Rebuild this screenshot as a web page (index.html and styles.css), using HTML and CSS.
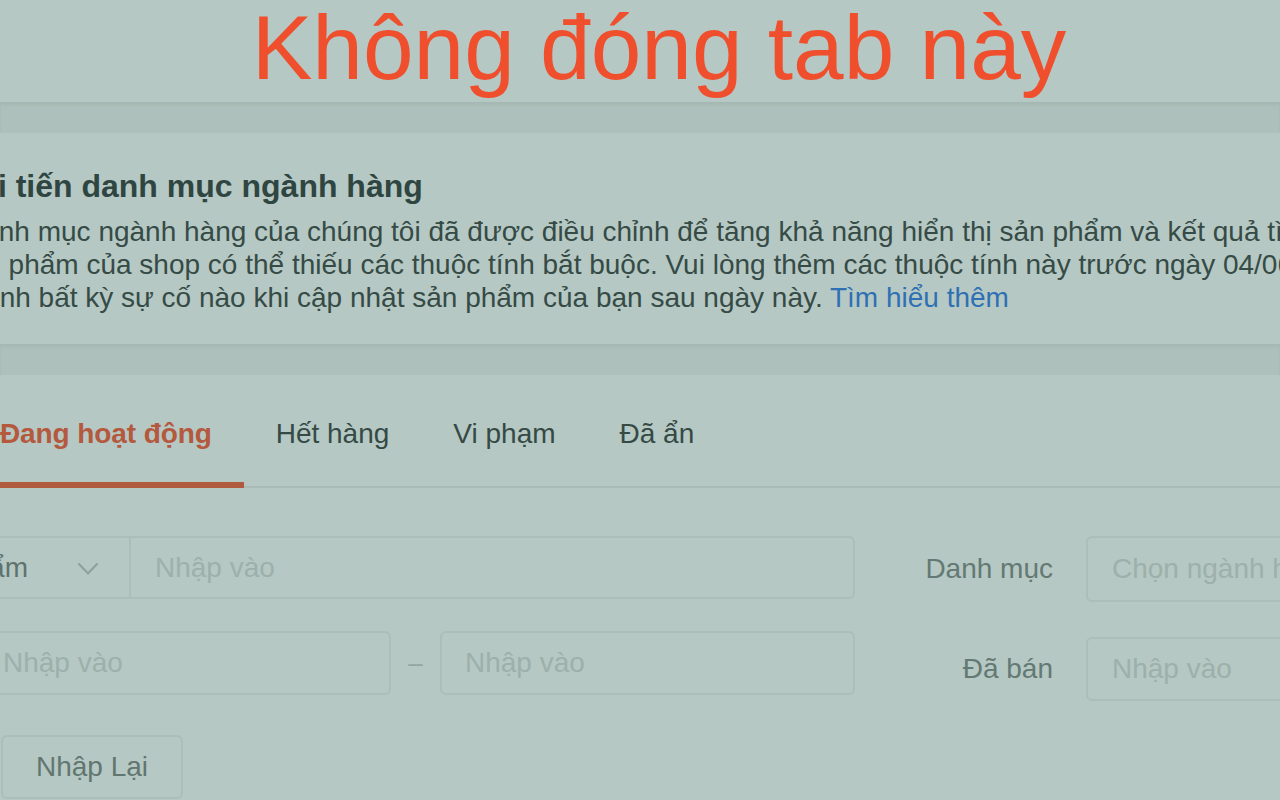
FILE: index.html
```html
<!DOCTYPE html>
<html lang="vi">
<head>
<meta charset="utf-8">
<title>Sản phẩm</title>
<link rel="stylesheet" href="styles.css">
</head>
<body>
<div class="page">
  <header class="topbar">
    <h1 class="warn">Không đóng tab này</h1>
  </header>
  <div class="band"></div>
  <section class="notice">
    <h2 class="notice-title">Cải tiến danh mục ngành hàng</h2>
    <div class="notice-body">
      <div class="line l1">Danh mục ngành hàng của chúng tôi đã được điều chỉnh để tăng khả năng hiển thị sản phẩm và kết quả tìm kiếm.</div>
      <div class="line l2">Sản phẩm của shop có thể thiếu các thuộc tính bắt buộc. Vui lòng thêm các thuộc tính này trước ngày 04/06/2022 để</div>
      <div class="line">tránh bất kỳ sự cố nào khi cập nhật sản phẩm của bạn sau ngày này. <a class="link" href="#">Tìm hiểu thêm</a></div>
    </div>
  </section>
  <div class="band"></div>
  <section class="panel">
    <nav class="tabs">
      <div class="tab active">Đang hoạt động</div>
      <div class="tab">Hết hàng</div>
      <div class="tab">Vi phạm</div>
      <div class="tab">Đã ẩn</div>
    </nav>
    <form class="filters">
      <div class="row">
        <div class="left group">
          <div class="select-seg">
            <span class="seg-text">Tên sản phẩm</span>
            <svg class="chev" width="22" height="14" viewBox="0 0 22 14"><path d="M1.5 1.5 L11 11.5 L20.5 1.5" fill="none" stroke="#8ea29d" stroke-width="2.2"/></svg>
          </div>
          <input class="seg-input" type="text" placeholder="Nhập vào">
        </div>
        <label class="label">Danh mục</label>
        <input class="rinput" type="text" placeholder="Chọn ngành hàng">
      </div>
      <div class="row">
        <div class="left range">
          <input class="box first" type="text" placeholder="Nhập vào">
          <span class="dash">–</span>
          <input class="box second" type="text" placeholder="Nhập vào">
        </div>
        <label class="label lower">Đã bán</label>
        <input class="rinput lower" type="text" placeholder="Nhập vào">
      </div>
      <div class="row actions">
        <button class="btn" type="button">Nhập Lại</button>
      </div>
    </form>
  </section>
</div>
</body>
</html>
```

FILE: styles.css
```css
html, body {
  margin: 0;
  padding: 0;
}
body {
  width: 1280px;
  height: 800px;
  overflow: hidden;
  background: #b5c8c3;
  font-family: "Liberation Sans", Arial, Helvetica, sans-serif;
  color: #364b46;
}
.page {
  width: 1280px;
  overflow: hidden;
}
.topbar {
  height: 102px;
  padding-left: 38px;
  box-sizing: border-box;
  text-align: center;
}
.warn {
  margin: 0;
  font-size: 91px;
  line-height: 96px;
  font-weight: 400;
  color: #f04f2d;
}
.band {
  height: 31px;
  background: #aec0bb;
  border-top: 1px solid #a6b8b3;
  box-sizing: border-box;
  box-shadow: inset 0 2px 3px rgba(80, 100, 95, 0.08);
}
.notice {
  height: 211px;
  box-sizing: border-box;
  padding-top: 35px;
}
.notice-title {
  margin: 0 0 10px -43px;
  font-size: 32px;
  line-height: 37px;
  font-weight: 700;
  color: #2f4541;
  white-space: nowrap;
}
.notice-body {
  margin-left: -33px;
  font-size: 28px;
  line-height: 33px;
  color: #364b46;
}
.line {
  white-space: nowrap;
}
.l1 {
  text-indent: -4px;
}
.l2 {
  text-indent: -16px;
}
.link {
  color: #2f70b4;
  text-decoration: none;
}
.tabs {
  display: flex;
  margin-left: -32px;
  border-bottom: 2px solid #a8bbb6;
}
.tab {
  padding: 43px 32px 32px;
  font-size: 28px;
  line-height: 32px;
  color: #354a45;
  border-bottom: 6px solid transparent;
  margin-bottom: -2px;
  white-space: nowrap;
}
.tab.active {
  color: #b4583e;
  font-weight: 700;
  letter-spacing: -0.1px;
  border-bottom-color: #b05a40;
}
.filters {
  margin: 48px 0 0 -22px;
  display: flex;
  flex-direction: column;
  gap: 29px;
}
.row {
  display: flex;
  align-items: flex-start;
}
.actions {
  padding-top: 5px;
}
.left {
  width: 877px;
  flex: none;
  display: flex;
}
.group {
  height: 63px;
  border: 2px solid #abbeb9;
  border-radius: 6px;
  box-sizing: border-box;
}
.select-seg {
  width: 151px;
  flex: none;
  display: flex;
  align-items: center;
  justify-content: flex-end;
  overflow: hidden;
  padding-right: 30px;
  box-sizing: border-box;
  border-right: 2px solid #abbeb9;
  font-size: 28px;
  color: #5f736e;
  white-space: nowrap;
}
.chev {
  flex: none;
  margin-left: 49px;
  margin-top: 2px;
}
input {
  font-family: "Liberation Sans", Arial, Helvetica, sans-serif;
  font-size: 28px;
  color: #364b46;
  background: transparent;
  outline: none;
  box-sizing: border-box;
}
input::placeholder {
  color: #9db0ab;
  opacity: 1;
}
.seg-input {
  flex: 1;
  border: none;
  padding: 0 0 0 24px;
  height: 59px;
}
.range {
  align-items: center;
}
.box {
  height: 64px;
  border: 2px solid #abbeb9;
  border-radius: 6px;
  padding: 0 0 0 23px;
}
.first {
  width: 413px;
}
.second {
  width: 415px;
}
.dash {
  width: 49px;
  text-align: center;
  font-size: 26px;
  color: #93a7a1;
}
.label {
  width: 198px;
  flex: none;
  text-align: right;
  font-size: 28px;
  line-height: 66px;
  color: #647974;
  white-space: nowrap;
}
.label.lower {
  margin-top: 6px;
  line-height: 64px;
}
.rinput {
  margin-left: 33px;
  width: 300px;
  flex: none;
  height: 66px;
  border: 2px solid #abbeb9;
  border-radius: 6px;
  padding: 0 0 0 24px;
}
.rinput.lower {
  margin-top: 6px;
  height: 64px;
}
.btn {
  margin-left: 23px;
  width: 182px;
  height: 64px;
  border: 2px solid #abbeb9;
  border-radius: 6px;
  background: transparent;
  font-family: "Liberation Sans", Arial, Helvetica, sans-serif;
  font-size: 28px;
  color: #627670;
  padding: 0;
}
```
